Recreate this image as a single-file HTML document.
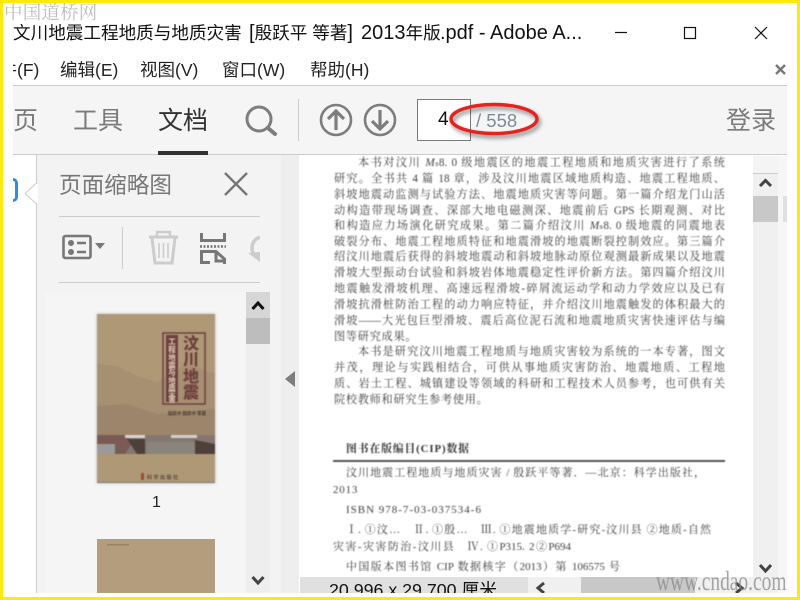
<!DOCTYPE html>
<html lang="zh"><head><meta charset="utf-8"><title>PDF</title>
<style>
html,body{margin:0;padding:0;background:#fff}
#r{position:relative;width:800px;height:600px;overflow:hidden;background:#fff;font-family:"Liberation Sans","Noto Sans CJK SC",sans-serif}
.a{position:absolute}
.t{position:absolute;white-space:nowrap}
.l{position:absolute;left:334px;width:391px;height:16px;font:11.2px/16px "Liberation Serif","Noto Serif CJK SC",serif;color:#404040;text-align:justify;text-align-last:justify;white-space:nowrap}
.n{text-align-last:left}
.m{position:absolute;top:58px;white-space:nowrap;font-size:17.5px;line-height:24px;color:#222}
.h{position:absolute;top:21px;white-space:nowrap;font-size:17.6px;line-height:24px;color:#111}
.h span{font-size:20px}
</style></head><body><div id="r">
<div class="t" style="left:4px;top:1px;font:18.5px/22px 'Noto Serif CJK SC',serif;letter-spacing:.2px;color:#bdbdbd">中国道桥网</div>
<div class="h" style="left:13px">文川地震工程地质与地质灾害</div>
<div class="h" style="left:249px"><span>[</span>殷跃平 等著<span>]</span></div>
<div class="h" style="left:361px"><span>2013</span>年版</div>
<div class="h" style="left:440px"><span>.pdf - Adobe A...</span></div>
<svg class="a" style="left:600px;top:20px" width="190" height="26" fill="none" stroke="#111" stroke-width="1.2"><path d="M15 12.500H27"/><rect x="84.500" y="7.500" width="11" height="11"/><path d="M155 7L167 19M167 7L155 19"/></svg>
<div class="a" style="left:13px;top:58px;width:4px;height:24px;overflow:hidden"><div class="t" style="right:0;font-size:17.500px;line-height:24px;color:#222">件</div></div>
<div class="m" style="left:17px">(F)</div>
<div class="m" style="left:60px">编辑(E)</div>
<div class="m" style="left:140px">视图(V)</div>
<div class="m" style="left:222px">窗口(W)</div>
<div class="m" style="left:310px">帮助(H)</div>
<svg class="a" style="left:774px;top:62px" width="12" height="14" stroke="#777" stroke-width="2.400"><path d="M2 3L11 12M11 3L2 12"/></svg>

<!-- toolbar -->
<div class="a" style="left:13px;top:85px;width:774px;height:70px;background:#f5f5f5;border-top:1px solid #ccc;border-bottom:1px solid #ccc;box-sizing:border-box"></div>
<div class="t" style="left:13px;top:103px;width:25px;overflow:hidden;font-size:25px;line-height:36px;color:#7a7a7a;direction:rtl">页</div>
<div class="t" style="left:73px;top:103px;font-size:25px;line-height:36px;color:#7a7a7a">工具</div>
<div class="t" style="left:158px;top:103px;font-size:25px;line-height:36px;color:#333">文档</div>
<div class="a" style="left:158px;top:151px;width:50px;height:4px;background:#333"></div>
<svg class="a" style="left:240px;top:100px" width="170" height="40" fill="none" stroke="#7d7d7d"><circle cx="19" cy="19" r="12" stroke-width="3"/><path d="M28 28L35 34" stroke-width="4" stroke-linecap="round"/><circle cx="96" cy="20" r="15" stroke-width="2.600"/><path d="M96 30V11M88 19L96 11L104 19" stroke-width="3.200"/><circle cx="140" cy="20" r="15" stroke-width="2.600"/><path d="M140 10V29M132 21L140 29L148 21" stroke-width="3.200"/></svg>
<div class="a" style="left:298px;top:99px;width:1px;height:42px;background:#ccc"></div>
<div class="a" style="left:417px;top:99px;width:54px;height:42px;box-sizing:border-box;border:1px solid #7a7a7a;background:#fff"></div>
<div class="t" style="left:438px;top:108px;font-size:19px;line-height:24px;color:#111">4</div>
<div class="t" style="left:476px;top:109px;font-size:18.500px;line-height:24px;color:#7f8a96">/ 558</div>
<svg class="a" style="left:439px;top:92px;filter:drop-shadow(2px 3px 2px rgba(0,0,0,.45))" width="115" height="56" fill="none"><ellipse cx="55" cy="27" rx="43" ry="14.500" stroke="#e8211d" stroke-width="3.400"/></svg>
<div class="t" style="left:726px;top:103px;font-size:25px;line-height:36px;color:#7a7a7a;width:61px;overflow:hidden">登录</div>

<!-- left strip -->
<div class="a" style="left:36px;top:155px;width:244px;height:438px;background:#f3f3f3;border-left:1px solid #ccc;border-right:1px solid #ccc"></div>
<div class="a" style="left:281px;top:155px;width:18px;height:438px;background:#eee"></div>
<div class="a" style="left:13px;top:178px;width:5px;height:24px;border:3px solid #2f8de0;border-left:0;border-radius:0 6px 6px 0;box-sizing:border-box"></div>
<svg class="a" style="left:24px;top:182px" width="14" height="24"><path d="M12.500 1L1 11.500L12.500 22" fill="#fff" stroke="#ccc"/><path d="M13 2V21" stroke="#fff" stroke-width="1.500"/></svg>
<div class="t" style="left:59px;top:170px;font-size:22.600px;line-height:32px;color:#777">页面缩略图</div>
<svg class="a" style="left:222px;top:170px" width="28" height="28" stroke="#777" stroke-width="2.400"><path d="M3 3L25 25M25 3L3 25"/></svg>
<div class="a" style="left:59px;top:216px;width:201px;height:1px;background:#ccc"></div>
<div class="a" style="left:59px;top:282px;width:201px;height:1px;background:#ccc"></div>
<div class="a" style="left:122px;top:227px;width:1px;height:42px;background:#ccc"></div>
<svg class="a" style="left:60px;top:228px" width="200" height="42" fill="none"><rect x="3.500" y="8" width="27" height="22" rx="2" stroke="#777" stroke-width="2.600"/><circle cx="11" cy="15" r="3" fill="#777"/><circle cx="11" cy="24" r="3" fill="#777"/><path d="M17 15H26M17 24H26" stroke="#777" stroke-width="2.400"/><path d="M35 15H45L40 21Z" fill="#777"/>
<g stroke="#ccc"><path d="M89 9H118" stroke-width="3"/><path d="M97 9V4H110V9" stroke-width="2.400"/><path d="M92 10L95 35H112L115 10" stroke-width="3"/><path d="M99 15V30M103.500 15V30M108 15V30" stroke-width="1.600"/></g>
<g stroke="#777" stroke-width="3"><path d="M141.500 5V12.500H164.500V5"/><path d="M140 18.500H166" stroke-dasharray="2 1.500" stroke-width="2.500"/><path d="M141.500 36V23.500H156L164.500 31V36M141.500 34.500H150M156 24V33H165"/></g>
<path d="M200 9C192 12 190 20 194 27" stroke="#ccc" stroke-width="3.500"/><path d="M188 25L200 34V24Z" fill="#ccc"/></svg>

<!-- thumbnails -->
<div class="a" style="left:45px;top:293px;width:201px;height:300px;background:#f5f5f5"></div>
<div class="a" style="left:246px;top:292px;width:24px;height:301px;background:#eee"></div>
<div class="a" style="left:246px;top:292px;width:24px;height:26px;background:#d6d6d6"></div>
<div class="a" style="left:246px;top:318px;width:24px;height:26px;background:#bdbdbd"></div>
<svg class="a" style="left:246px;top:292px" width="24" height="300" fill="none" stroke="#111" stroke-width="3"><path d="M6.500 17L12 11L17.500 17"/><path d="M6.500 285L12 291L17.500 285" stroke="#444"/></svg>

<svg class="a" style="left:97px;top:314px;filter:blur(.6px);box-shadow:0 0 3px #bbb" width="118" height="169">
<rect width="118" height="169" fill="#ae9876"/>
<path d="M0 50L20 52L40 62L60 68L90 50L118 60V121H0Z" fill="#a78f71"/>
<path d="M0 92L30 90L60 100L118 95V121H0Z" fill="#9d856b"/>
<path d="M0 121H118V140H0Z" fill="#857770"/>
<path d="M0 121H28L36 128L28 140H0Z" fill="#7a5a52"/><path d="M30 125H48L48 140H40Z" fill="#4d403c"/><path d="M28 121H48V124H28Z" fill="#d8d6d4"/><path d="M74 121H100V124H74Z" fill="#d0d0d0"/><path d="M0 130H18V140H0Z" fill="#9a9a9a"/><path d="M50 128H98V140H50Z" fill="#8a857c"/><path d="M98 126L118 130V140H98Z" fill="#4f403c"/>
<rect x="0" y="140" width="118" height="28" fill="#ae9876"/><rect y="168" width="118" height="1" fill="#7d7d7d"/>
<rect x="66" y="19" width="42" height="71" fill="none" stroke="#6e403f" stroke-width="1.500"/>
<rect x="69" y="21" width="12" height="67" fill="#6e403f"/>
<g font-family="Noto Sans CJK SC" font-weight="700" font-size="7.500" fill="#e0d0b8" text-anchor="middle"><text x="75" y="30">工</text><text x="75" y="38">程</text><text x="75" y="46">地</text><text x="75" y="54">震</text><text x="75" y="61">与</text><text x="75" y="69">地</text><text x="75" y="76">质</text><text x="75" y="82">灾</text><text x="75" y="88">害</text></g>
<g font-family="Noto Sans CJK SC" font-weight="900" font-size="16" fill="#6e403f" text-anchor="middle"><text x="94" y="35">汶</text><text x="94" y="51">川</text><text x="94" y="68">地</text><text x="94" y="84">震</text></g>
<text x="71" y="101" font-size="4.500" font-family="Noto Sans CJK SC" font-weight="700" fill="#4a3a34">殷跃平 殷跃平 等著</text>
<text x="50" y="165" font-size="5" font-family="Noto Sans CJK SC" font-weight="700" fill="#5b4a3d" letter-spacing="1.500">科学出版社</text>
<rect x="44" y="159" width="3" height="7" fill="#a04a30"/>
</svg>
<div class="t" style="left:152px;top:493px;font-size:16px;line-height:20px;color:#222">1</div>
<svg class="a" style="left:97px;top:539px" width="118" height="54"><rect width="118" height="54" fill="#b39d7c"/><rect x="10" y="5" width="22" height="1.500" fill="#9a8466"/></svg>

<svg class="a" style="left:284px;top:370px" width="12" height="18"><path d="M11 1V17L1 9Z" fill="#7d7d7d"/></svg>

<!-- page -->
<div class="a" style="left:299px;top:156px;width:454px;height:437px;background:#fff"></div>
<div class="a" style="left:753px;top:156px;width:25px;height:437px;background:#f0f0f0"></div>
<div class="a" style="left:753px;top:156px;width:25px;height:18px;background:#f4f4f4;border-bottom:1px solid #ccc;box-sizing:border-box"></div>
<div class="a" style="left:753px;top:196px;width:25px;height:26px;background:#c8c8c8"></div>
<div class="a" style="left:778px;top:156px;width:9px;height:437px;background:#f6f6f6"></div>
<div class="a" style="left:783px;top:196px;width:4px;height:26px;background:#e0e0e0"></div>
<svg class="a" style="left:753px;top:174px" width="25" height="400" fill="none" stroke="#444" stroke-width="3"><path d="M7 12L12.500 6.500L18 12"/><path d="M7 391L12.500 397L18 391"/></svg>

<div style="filter:blur(.4px)">
<div class="l" style="left:358px;width:367px;top:155px">本书对汶川 <i>M</i>ₛ8. 0 级地震区的地震工程地质和地质灾害进行了系统</div>
<div class="l" style="top:171px">研究。全书共 4 篇 18 章，涉及汶川地震区域地质构造、地震工程地质、</div>
<div class="l" style="top:187px">斜坡地震动监测与试验方法、地震地质灾害等问题。第一篇介绍龙门山活</div>
<div class="l" style="top:203px">动构造带现场调查、深部大地电磁测深、地震前后 GPS 长期观测、对比</div>
<div class="l" style="top:218px">和构造应力场演化研究成果。第二篇介绍汶川 <i>M</i>ₛ8. 0 级地震的同震地表</div>
<div class="l" style="top:234px">破裂分布、地震工程地质特征和地震滑坡的地震断裂控制效应。第三篇介</div>
<div class="l" style="top:249px">绍汶川地震后获得的斜坡地震动和斜坡地脉动原位观测最新成果以及地震</div>
<div class="l" style="top:265px">滑坡大型振动台试验和斜坡岩体地震稳定性评价新方法。第四篇介绍汶川</div>
<div class="l" style="top:281px">地震触发滑坡机理、高速远程滑坡-碎屑流运动学和动力学效应以及已有</div>
<div class="l" style="top:297px">滑坡抗滑桩防治工程的动力响应特征，并介绍汶川地震触发的体积最大的</div>
<div class="l" style="top:313px">滑坡——大光包巨型滑坡、震后高位泥石流和地震地质灾害快速评估与编</div>
<div class="l n" style="top:329px;letter-spacing:.7px">图等研究成果。</div>
<div class="l" style="left:358px;width:367px;top:344px">本书是研究汶川地震工程地质与地质灾害较为系统的一本专著，图文</div>
<div class="l" style="top:360px">并茂，理论与实践相结合，可供从事地质灾害防治、地震地质、工程地</div>
<div class="l" style="top:376px">质、岩土工程、城镇建设等领域的科研和工程技术人员参考，也可供有关</div>
<div class="l n" style="top:392px;letter-spacing:.7px">院校教师和研究生参考使用。</div>
<div class="l n" style="left:346px;top:441px;font-family:'Liberation Serif','Noto Serif CJK SC',serif;font-weight:700;font-size:10.800px;letter-spacing:.9px;color:#333">图书在版编目(CIP)数据</div>
<div class="a" style="left:333px;top:460px;width:392px;height:1.500px;background:#555"></div>
<div class="l" style="left:346px;width:359px;top:465px;font-size:11px">汶川地震工程地质与地质灾害 / 殷跃平等著．—北京：科学出版社，</div>
<div class="l n" style="left:333px;top:482px;font-size:11px;letter-spacing:.8px">2013</div>
<div class="l n" style="left:346px;top:502px;font-size:11px;letter-spacing:1px">ISBN 978-7-03-037534-6</div>
<div class="l" style="left:346px;width:365px;top:522px;font-size:11px">Ⅰ. ①汶…　Ⅱ. ①殷…　Ⅲ. ①地震地质学-研究-汶川县 ②地质-自然</div>
<div class="l" style="left:333px;width:238px;top:539px;font-size:11px">灾害-灾害防治-汶川县　Ⅳ. ①P315. 2②P694</div>
<div class="l" style="left:346px;width:274px;top:559px;font-size:11px">中国版本图书馆 CIP 数据核字（2013）第 106575 号</div>
</div>

<!-- bottom -->
<div class="a" style="left:300px;top:577px;width:228px;height:16px;background:#e0e0e0;overflow:hidden"><div class="t" style="left:29px;top:2px;font-size:17.800px;line-height:22px;color:#111">20.996 x 29.700 厘米</div></div>
<div class="a" style="left:528px;top:577px;width:225px;height:16px;background:#f0f0f0"></div>
<div class="a" style="left:581px;top:577px;width:114px;height:16px;background:#c8c8c8"></div>
<svg class="a" style="left:528px;top:577px" width="225" height="16" fill="none" stroke="#444" stroke-width="3"><path d="M16 6L10 11L16 16"/><path d="M208 6L214 11L208 16"/></svg>
<div class="t" style="left:656px;top:566px;font:27px/30px 'Liberation Serif',serif;color:#888;opacity:.75;transform:scaleX(.72);transform-origin:0 0">www.cndao.com</div>
<div class="a" style="left:0;top:593px;width:800px;height:4px;background:#fff"></div>

<!-- yellow frame -->
<div class="a" style="left:0;top:0;width:800px;height:3px;background:#ffe90a"></div>
<div class="a" style="left:0;top:597px;width:800px;height:3px;background:#ffe90a"></div>
<div class="a" style="left:0;top:0;width:3px;height:600px;background:#ffe90a"></div>
<div class="a" style="left:797px;top:0;width:3px;height:600px;background:#ffe90a"></div>
</div></body></html>
